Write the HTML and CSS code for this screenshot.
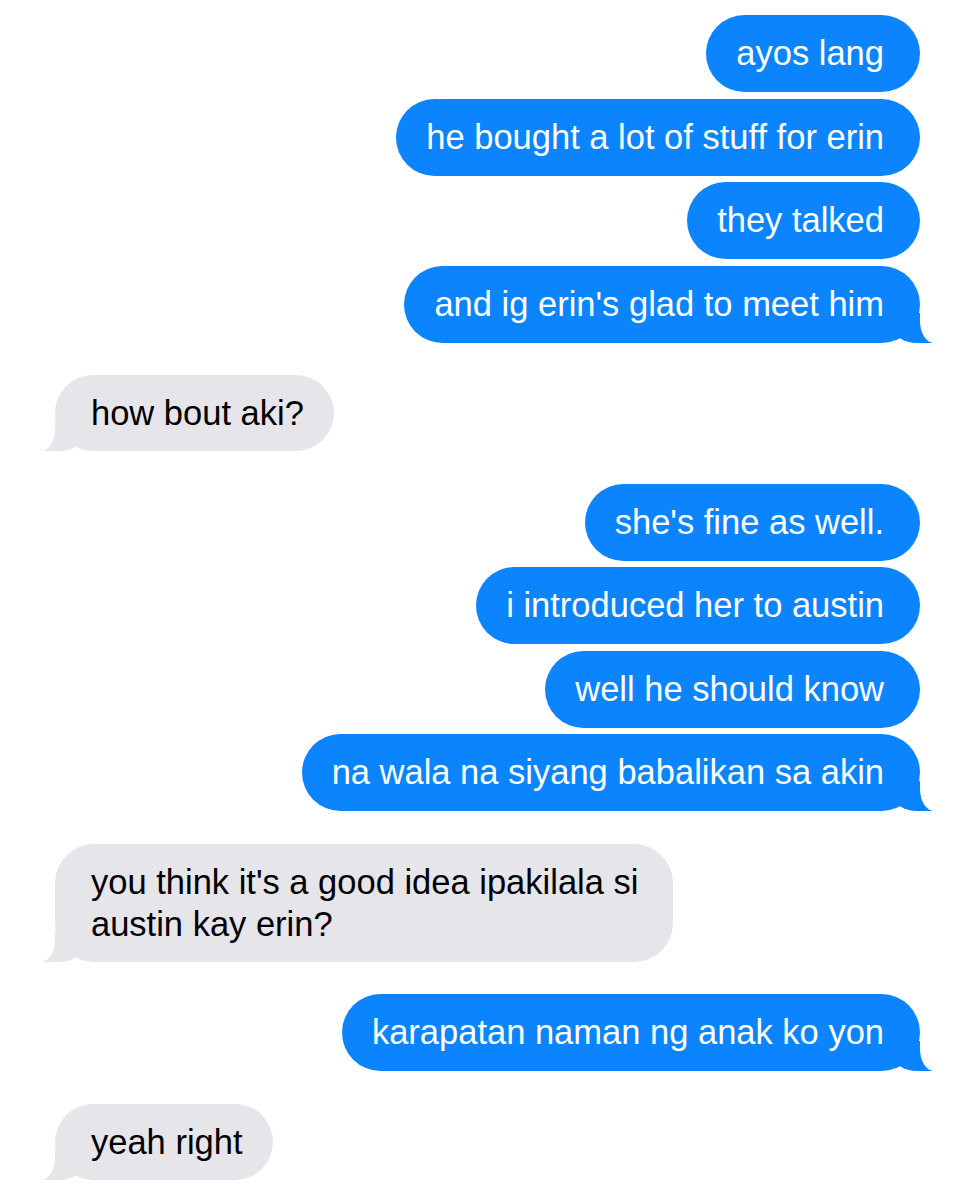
FILE: index.html
```html
<!DOCTYPE html>
<html lang="en">
<head>
    <meta charset="UTF-8">
    <meta name="viewport" content="width=device-width, initial-scale=1.0">
    <title>Messages</title>
    <link rel="stylesheet" href="styles.css">
</head>
<body>

    <div class="chat">

        <div class="group sent">
            <div class="bubble">ayos lang</div>
            <div class="bubble">he bought a lot of stuff for erin</div>
            <div class="bubble">they talked</div>
            <div class="bubble tail">and ig erin's glad to meet him</div>
        </div>

        <div class="group received">
            <div class="bubble tail">how bout aki?</div>
        </div>

        <div class="group sent">
            <div class="bubble">she's fine as well.</div>
            <div class="bubble">i introduced her to austin</div>
            <div class="bubble">well he should know</div>
            <div class="bubble tail">na wala na siyang babalikan sa akin</div>
        </div>

        <div class="group received">
            <div class="bubble tail">you think it's a good idea ipakilala si austin kay erin?</div>
        </div>

        <div class="group sent">
            <div class="bubble tail">karapatan naman ng anak ko yon</div>
        </div>

        <div class="group received">
            <div class="bubble tail">yeah right</div>
        </div>

    </div>

</body>
</html>
```

FILE: styles.css
```css
/* Plain white page, like the Messages thread */
body, html {
    margin: 0;
    background-color: #ffffff;
    font-family: "Liberation Sans", Arial, sans-serif;
}

.chat {
    display: flex;
    flex-direction: column;
    gap: 32.5px; /* space between sender groups */
    padding: 15px 59px 0 55px;
}

.group {
    display: flex;
    flex-direction: column;
    gap: 6.5px; /* space between bubbles from the same sender */
}

.group.sent {
    align-items: flex-end;
}

.group.received {
    align-items: flex-start;
}

.bubble {
    position: relative; /* for the tail */
    box-sizing: border-box;
    font-size: 34.5px;
    border-radius: 39px;
}

.sent .bubble {
    max-width: 700px;
    padding: 18px 36px 18px 30px;
    line-height: 41px;
    background-color: #0b84fe;
    color: #ffffff;
}

.received .bubble {
    max-width: 618px; /* long messages wrap onto a second line */
    padding: 17px 30px 17px 36px;
    line-height: 42px;
    background-color: #e5e5ea;
    color: #000000;
}

/* Tail: a coloured corner, then a white piece cut out of it */
.bubble.tail::before,
.bubble.tail::after {
    content: "";
    position: absolute;
    bottom: 0;
    height: 30px;
}

.sent .bubble.tail::before {
    right: -13px;
    width: 40px;
    background-color: #0b84fe;
    border-bottom-left-radius: 24px 16px;
}

.sent .bubble.tail::after {
    right: -33px;
    width: 33px;
    background-color: #ffffff;
    border-bottom-left-radius: 14px 22px;
}

.received .bubble.tail::before {
    left: -12px;
    width: 40px;
    background-color: #e5e5ea;
    border-bottom-right-radius: 24px 16px;
}

.received .bubble.tail::after {
    left: -32px;
    width: 32px;
    background-color: #ffffff;
    border-bottom-right-radius: 14px 22px;
}
```
